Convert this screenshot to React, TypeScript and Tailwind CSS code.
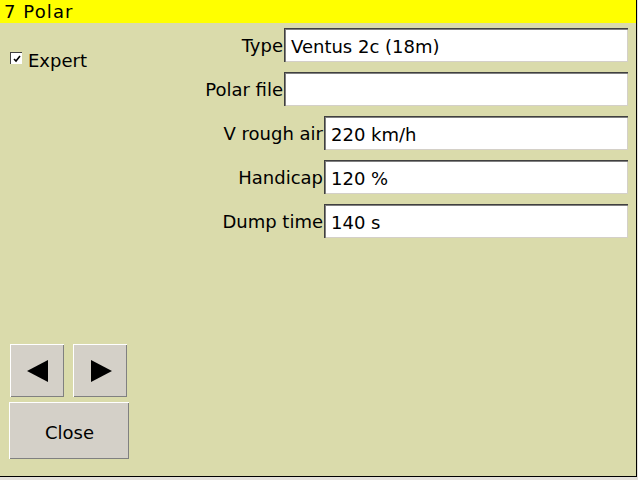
import React from "react";

const font = { fontFamily: '"DejaVu Sans", "Liberation Sans", sans-serif' };

function Field({ label, value, w }: { label: string; value: string; w: string }) {
  return (
    <div className="flex items-center justify-end h-[34px]">
      <span className="text-[18px] text-black leading-none pr-[1px] pt-[2px]">{label}</span>
      <div
        className={`${w} h-[34px] bg-white border-t border-l border-[#404040] border-r-white border-b-white shadow-[inset_1px_1px_0_#808080,inset_-1px_-1px_0_#d4d0c8] flex items-center pl-[6px] pt-[2px] text-[18px] text-black leading-none`}
      >
        {value}
      </div>
    </div>
  );
}

function Btn({ children, cls }: { children: React.ReactNode; cls: string }) {
  return (
    <div
      className={`${cls} bg-[#d4d0c8] border-t border-l border-white border-r-[#404040] border-b-[#404040] shadow-[inset_-1px_-1px_0_#808080] flex items-center justify-center`}
    >
      {children}
    </div>
  );
}

export default function App() {
  return (
    <div className="w-[638px] h-[480px] bg-[#e4e1dc]" style={font}>
      <div className="w-[637px] h-[477px] bg-[#dadbab] border-r border-b border-black flex flex-col">
        <div className="h-[23px] bg-[#ffff00] flex items-center pl-[4px] text-[18px] tracking-[1.1px] text-black leading-none">
          7 Polar
        </div>
        <div className="flex-1 flex">
          <div className="w-[200px] flex flex-col pl-[9px] pb-[17px]">
            <div className="flex items-center mt-[28px] h-[20px]">
              <div className="w-[12px] h-[12px] ml-[1px] -mt-[6px] bg-white border-t border-l border-[#404040] border-r-white border-b-white flex items-center justify-center">
                <svg width="8" height="8" viewBox="0 0 8 8">
                  <path d="M1 4 L3 6 L7 1" stroke="black" strokeWidth="1.6" fill="none" />
                </svg>
              </div>
              <span className="ml-[6px] text-[18px] text-black leading-none">Expert</span>
            </div>
            <div className="flex-1" />
            <div className="flex gap-[9px] pl-[1px]">
              <Btn cls="w-[54px] h-[53px]">
                <svg width="22" height="22" viewBox="0 0 22 22">
                  <polygon points="0,11 21,0 21,22" fill="black" />
                </svg>
              </Btn>
              <Btn cls="w-[54px] h-[53px]">
                <svg width="22" height="22" viewBox="0 0 22 22">
                  <polygon points="22,11 1,0 1,22" fill="black" />
                </svg>
              </Btn>
            </div>
            <Btn cls="w-[120px] h-[57px] mt-[5px]">
              <span className="text-[18px] text-black leading-none pt-[4px]">Close</span>
            </Btn>
          </div>
          <div className="flex-1 flex flex-col gap-[10px] pt-[5px] pr-[8px]">
            <Field label="Type" value="Ventus 2c (18m)" w="w-[344px]" />
            <Field label="Polar file" value="" w="w-[344px]" />
            <Field label="V rough air" value="220 km/h" w="w-[304px]" />
            <Field label="Handicap" value="120 %" w="w-[304px]" />
            <Field label="Dump time" value="140 s" w="w-[304px]" />
          </div>
        </div>
      </div>
    </div>
  );
}
